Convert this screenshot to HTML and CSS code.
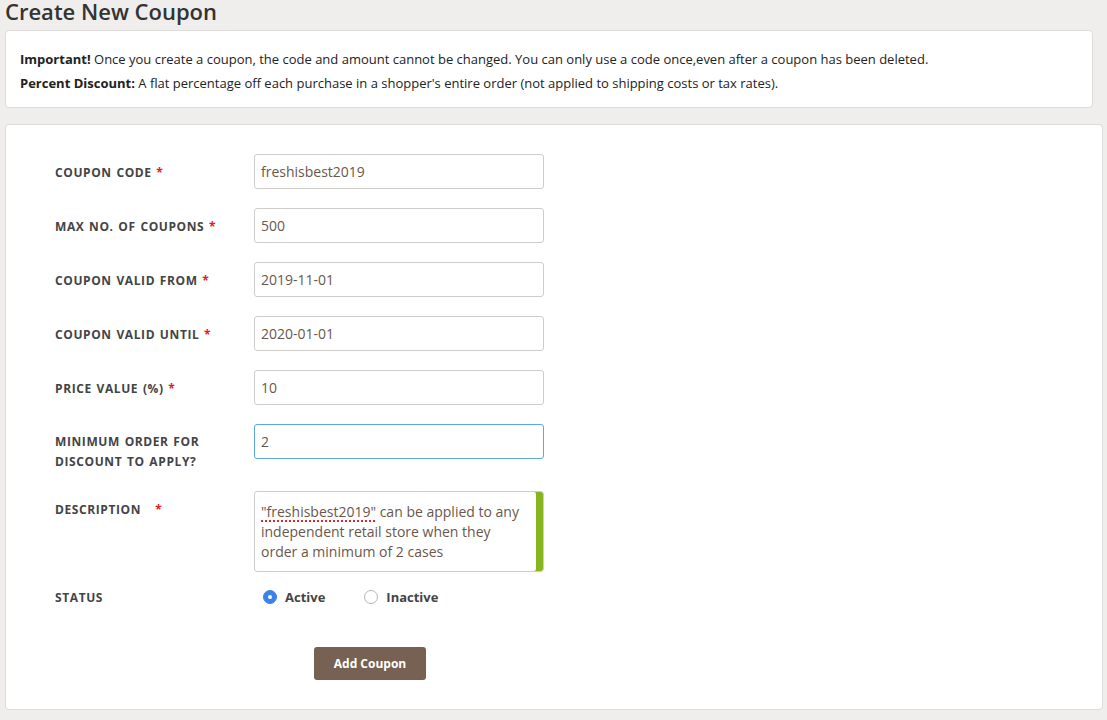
FILE: index.html
```html
<!DOCTYPE html>
<html lang="en">
<head>
<meta charset="utf-8">
<title>Create New Coupon</title>
<link rel="stylesheet" href="styles.css">
</head>
<body>
<h1 class="page-title">Create New Coupon</h1>
<div class="info-box">
  <p><b>Important!</b> Once you create a coupon, the code and amount cannot be changed. You can only use a code once,even after a coupon has been deleted.</p>
  <p><b>Percent Discount:</b> A flat percentage off each purchase in a shopper's entire order (not applied to shipping costs or tax rates).</p>
</div>
<div class="card">
  <form class="form">
    <div class="row">
      <label class="label">COUPON CODE <span class="req">*</span></label>
      <input class="input" type="text" value="freshisbest2019">
    </div>
    <div class="row">
      <label class="label">MAX NO. OF COUPONS <span class="req">*</span></label>
      <input class="input" type="text" value="500">
    </div>
    <div class="row">
      <label class="label">COUPON VALID FROM <span class="req">*</span></label>
      <input class="input" type="text" value="2019-11-01">
    </div>
    <div class="row">
      <label class="label">COUPON VALID UNTIL <span class="req">*</span></label>
      <input class="input" type="text" value="2020-01-01">
    </div>
    <div class="row">
      <label class="label">PRICE VALUE (%) <span class="req">*</span></label>
      <input class="input" type="text" value="10">
    </div>
    <div class="row">
      <label class="label label-wrap">MINIMUM ORDER FOR DISCOUNT TO APPLY?</label>
      <input class="input input-focus" type="text" value="2">
    </div>
    <div class="row">
      <label class="label">DESCRIPTION &nbsp;&nbsp;<span class="req">*</span></label>
      <div class="textarea"><span class="spell">"freshisbest2019"</span> can be applied to any independent retail store when they order a minimum of 2 cases</div>
    </div>
    <div class="row row-status">
      <label class="label label-status">STATUS</label>
      <div class="radios">
        <span class="radio-item"><span class="radio radio-on"></span>Active</span>
        <span class="radio-item"><span class="radio"></span>Inactive</span>
      </div>
    </div>
    <div class="actions">
      <button class="btn" type="button">Add Coupon</button>
    </div>
  </form>
</div>
</body>
</html>
```
FILE: styles.css
```css
* { box-sizing: border-box; }
html, body { margin: 0; padding: 0; }
body {
  background: #efeeec;
  font-family: "Open Sans", "Noto Sans", sans-serif;
  color: #333;
  padding: 0 4px 0 5px;
  height: 720px;
  overflow: hidden;
}
.page-title {
  margin: 0;
  font-size: 22px;
  line-height: 22px;
  font-weight: 600;
  color: #333;
}
.info-box {
  margin: 8px 10px 0 0;
  background: #fff;
  border: 1px solid #dddcda;
  border-radius: 4px;
  padding: 16px 14px 12px;
  height: 78px;
  font-size: 13px;
  color: #222;
}
.info-box p { margin: 0; line-height: 24px; }
.info-box b { font-weight: 700; }
.card {
  margin-top: 16px;
  background: #fff;
  border: 1px solid #dddcda;
  border-radius: 4px;
  height: 586px;
  padding: 29px 0 0 49px;
}
.form { display: flex; flex-direction: column; gap: 19px; }
.row {
  display: grid;
  grid-template-columns: 199px 290px;
  align-items: start;
}
.label {
  font-size: 12px;
  font-weight: 700;
  color: #444;
  line-height: 20px;
  padding-top: 9px;
  letter-spacing: 0.6px;
  word-spacing: 1px;
}
.label-wrap { width: 160px; padding-top: 8px; }
.req { color: #e0201b; }
.input {
  width: 290px;
  height: 35px;
  border: 1px solid #cfcdcb;
  border-radius: 3px;
  padding: 0 6px;
  font-family: "Open Sans", "Noto Sans", sans-serif;
  font-size: 14px;
  color: #6a574b;
  background: #fff;
  outline: none;
}
.input-focus { border-color: #5aa8e4; }
.textarea {
  width: 290px;
  height: 81px;
  border: 1px solid #cfcdcb;
  border-radius: 3px;
  padding: 10px 20px 0 6px;
  font-size: 14px;
  line-height: 20px;
  color: #6a574b;
  box-shadow: inset -7px 0 0 #88b51e;
}
.spell {
  text-decoration: underline dotted #e02a2a;
  text-underline-offset: 3px;
  text-decoration-thickness: 1.5px;
}
.row-status { height: 17px; }
.label-status { padding-top: 0; line-height: 14px; }
.radios {
  display: flex;
  gap: 39px;
  padding-left: 9px;
  font-size: 13px;
  font-weight: 700;
  color: #444;
  line-height: 14px;
  margin-top: -1px;
}
.radio-item { display: inline-flex; align-items: center; gap: 8px; }
.radio {
  width: 14px;
  height: 14px;
  border-radius: 50%;
  border: 1px solid #b5b5b5;
  background: #fff;
  display: inline-block;
  position: relative;
}
.radio-on {
  background: #3b82f0;
  border-color: #3b82f0;
}
.radio-on::after {
  content: "";
  position: absolute;
  left: 4px;
  top: 4px;
  width: 4px;
  height: 4px;
  border-radius: 50%;
  background: #fff;
}
.actions { padding: 20px 0 0 259px; }
.btn {
  width: 112px;
  height: 33px;
  border: none;
  border-radius: 3px;
  background: #776152;
  color: #fff;
  font-family: "Open Sans", "Noto Sans", sans-serif;
  font-size: 12px;
  font-weight: 700;
  cursor: pointer;
}
```
